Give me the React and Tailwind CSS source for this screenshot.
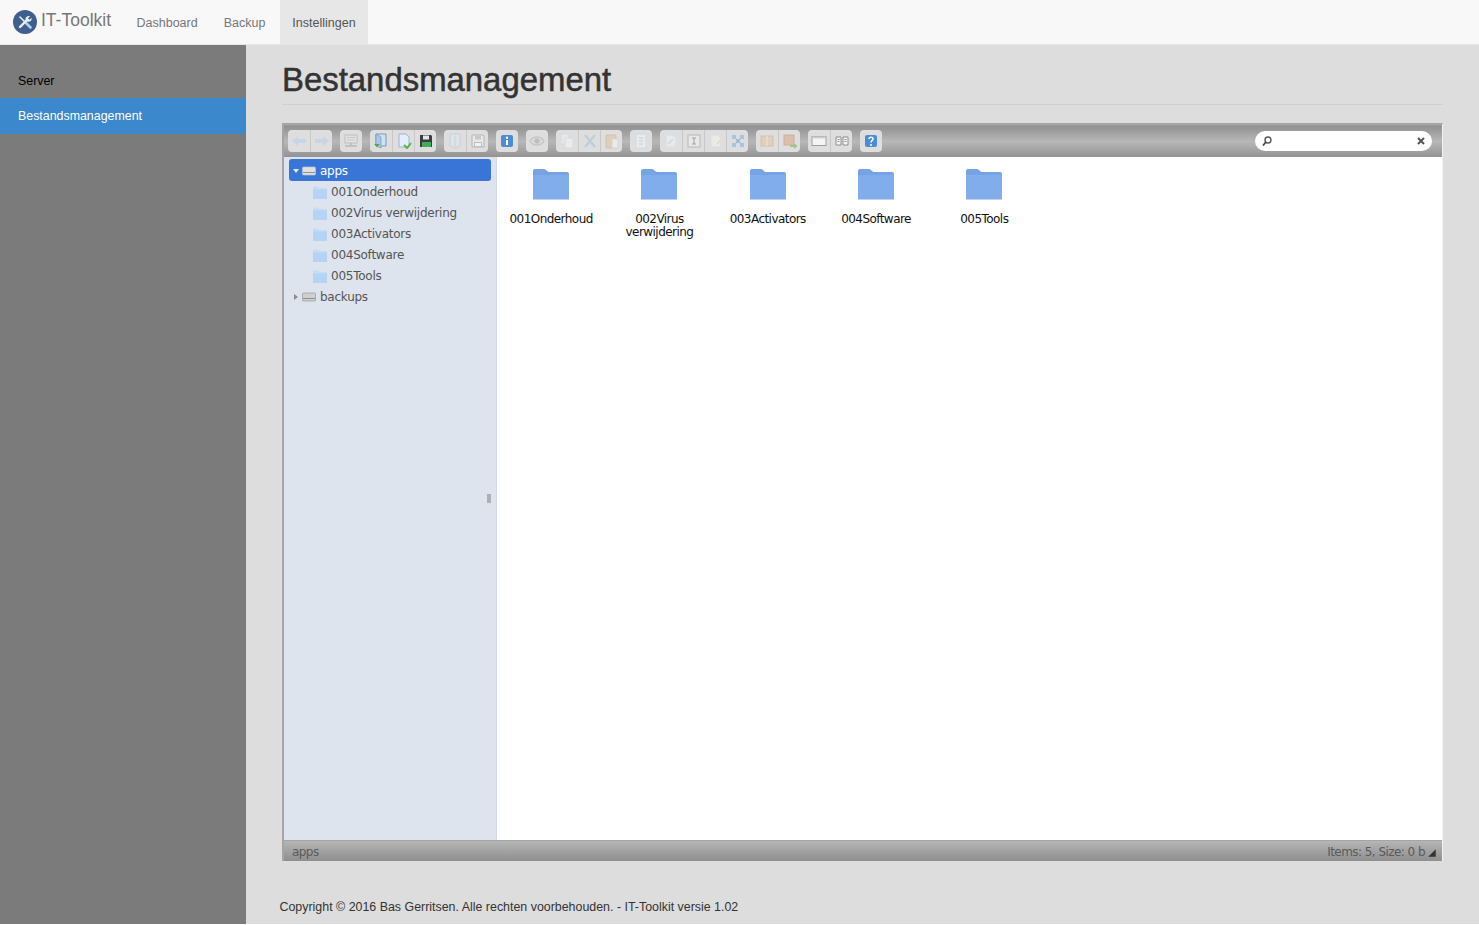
import React from "react";

function Ic({ k }) {
  const c = "w-[16px] h-[16px]";
  switch (k) {
    case "back":
      return <svg className={c} viewBox="0 0 16 16"><path d="M1 8l6-5v3h8v4H7v3z" fill="#b5d3ec" /></svg>;
    case "fwd":
      return <svg className={c} viewBox="0 0 16 16"><path d="M15 8L9 3v3H1v4h8v3z" fill="#b5d3ec" /></svg>;
    case "net":
      return <svg className={c} viewBox="0 0 16 16"><rect x="2" y="2" width="12" height="8" fill="#e4e4e4" stroke="#a9a9a9" /><path d="M4 4.500h8M4 7h8" stroke="#bbb" /><path d="M8 10v2M2 13h12" stroke="#a0a0a0" strokeWidth="1.500" /></svg>;
    case "open":
      return <svg className={c} viewBox="0 0 16 16"><path d="M3 1h10v12H3z" fill="#cfe2f3" stroke="#7a98b5" /><path d="M3 1l5 3v11l-5-2z" fill="#a9c8e6" stroke="#7a98b5" strokeWidth=".7" /><path d="M1 11l3 3 3-3z" fill="#55a84a" /></svg>;
    case "new":
      return <svg className={c} viewBox="0 0 16 16"><path d="M3 1h7l3 3v10H3z" fill="#e4eefa" stroke="#9db6cf" /><path d="M8 12l3 3 4-5" fill="none" stroke="#62b04e" strokeWidth="2" /></svg>;
    case "save":
      return <svg className={c} viewBox="0 0 16 16"><path d="M2 2h11l1 1v11H2z" fill="#3d3d3d" /><rect x="5" y="2.500" width="6" height="4" fill="#dfe8ee" /><rect x="4" y="9" width="9" height="5" fill="#3fae58" /></svg>;
    case "book":
      return <svg className={c} viewBox="0 0 16 16"><path d="M3 1h10v12l-5 2-5-2z" fill="#dce6f0" stroke="#b8c8d8" /><path d="M8 3v11" stroke="#b8c8d8" /></svg>;
    case "floppy":
      return <svg className={c} viewBox="0 0 16 16"><path d="M2 2h11l1 1v11H2z" fill="#eee" stroke="#999" /><rect x="5" y="2.500" width="6" height="4" fill="#bbb" /><rect x="4.500" y="9.500" width="7" height="4" fill="#fff" stroke="#aaa" /></svg>;
    case "info":
      return <svg className={c} viewBox="0 0 16 16"><rect x="2" y="2" width="12" height="12" rx="2" fill="#4a8cd6" /><circle cx="8" cy="4.800" r="1.200" fill="#fff" /><path d="M8 7v5" stroke="#fff" strokeWidth="2" /></svg>;
    case "eye":
      return <svg className={c} viewBox="0 0 16 16"><ellipse cx="8" cy="8" rx="7" ry="4" fill="#d5d5d5" stroke="#a8a8a8" /><circle cx="8" cy="8" r="2.500" fill="#a8a8a8" /></svg>;
    case "copy":
      return <svg className={c} viewBox="0 0 16 16"><path d="M2 1h8v10H2z" fill="#ededed" stroke="#d2d8de" /><path d="M6 5h8v10H6z" fill="#f3f3f3" stroke="#d2d8de" /></svg>;
    case "cut":
      return <svg className={c} viewBox="0 0 16 16"><path d="M3 2l10 12M13 2L3 14" stroke="#a7c3db" strokeWidth="2.400" /></svg>;
    case "paste":
      return <svg className={c} viewBox="0 0 16 16"><rect x="2" y="2" width="10" height="13" rx="1" fill="#dcc6a4" stroke="#c8ad85" /><path d="M8 6h6v9H8z" fill="#f5f5f5" stroke="#cfcfcf" /></svg>;
    case "doc":
      return <svg className={c} viewBox="0 0 16 16"><rect x="3" y="1" width="10" height="14" fill="#eef2f6" stroke="#c9d6e2" /><path d="M6 5h4M6 8h4M6 11h4" stroke="#a9c2d8" /></svg>;
    case "dup":
      return <svg className={c} viewBox="0 0 16 16"><path d="M3 2h7l3 3v9H3z" fill="#edf1f5" stroke="#d5dde5" /><path d="M5 11l5-5" stroke="#c4d6e6" strokeWidth="1.500" /></svg>;
    case "rename":
      return <svg className={c} viewBox="0 0 16 16"><rect x="2" y="2" width="12" height="12" fill="#eeeeee" stroke="#a0a0a0" /><path d="M6 5h4M8 5v6M6 11h4" stroke="#777" /></svg>;
    case "edit":
      return <svg className={c} viewBox="0 0 16 16"><path d="M3 2h7l3 3v9H3z" fill="#f2f2f2" stroke="#dddddd" /><path d="M9 11l4-4" stroke="#e2d6a8" strokeWidth="1.500" /></svg>;
    case "resize":
      return <svg className={c} viewBox="0 0 16 16"><path d="M2 2h4v4H2zM10 2h4v4h-4zM2 10h4v4H2zM10 10h4v4h-4z" fill="#a5c6e2" /><path d="M6 6l4 4M10 6l-4 4" stroke="#8fb4d4" strokeWidth="1.500" /></svg>;
    case "arc":
      return <svg className={c} viewBox="0 0 16 16"><rect x="2" y="3" width="12" height="10" fill="#e2c7a8" stroke="#d0ad88" /><path d="M8 3v10" stroke="#ecd9c2" strokeWidth="2" /></svg>;
    case "ext":
      return <svg className={c} viewBox="0 0 16 16"><rect x="2" y="2" width="10" height="10" fill="#dba98a" stroke="#c98f6d" /><path d="M8 12h4v-2l3.500 3-3.500 3v-2H8z" fill="#6cb85a" /></svg>;
    case "view":
      return <svg className={c} viewBox="0 0 16 16"><rect x="1" y="3.500" width="14" height="9" fill="#f5f5f5" stroke="#9f9f9f" /><rect x="1" y="3.500" width="14" height="2" fill="#cfcfcf" /></svg>;
    case "sort":
      return <svg className={c} viewBox="0 0 16 16"><path d="M2 4h5v8H2zM9 4h5v8H9z" fill="#f5f5f5" stroke="#8f8f8f" /><path d="M3.500 6.500h2M3.500 8.500h2M10.500 6.500h2M10.500 8.500h2" stroke="#8f8f8f" /></svg>;
    case "help":
      return <svg className={c} viewBox="0 0 16 16"><rect x="2" y="2" width="12" height="12" rx="2" fill="#4a8cd6" /><path d="M6 6c0-2.500 4-2.500 4 0 0 1.500-2 1.500-2 3.500" fill="none" stroke="#fff" strokeWidth="1.500" /><circle cx="8" cy="12" r="1" fill="#fff" /></svg>;
    default:
      return null;
  }
}

const groups = [
  [["back", 1], ["fwd", 1]],
  [["net", 1]],
  [["open", 0], ["new", 0], ["save", 0]],
  [["book", 1], ["floppy", 1]],
  [["info", 0]],
  [["eye", 1]],
  [["copy", 1], ["cut", 1], ["paste", 1]],
  [["doc", 1]],
  [["dup", 1], ["rename", 1], ["edit", 1], ["resize", 0]],
  [["arc", 1], ["ext", 1]],
  [["view", 0], ["sort", 0]],
  [["help", 0]],
];

function Folder({ small }) {
  if (small)
    return (
      <svg className="w-[16px] h-[16px]" viewBox="0 0 16 16">
        <path d="M1 2.500h5l1 1.500h8v11H1z" fill="#c4dcf4" />
        <path d="M1 5.500h14V15H1z" fill="#b5d3f2" />
      </svg>
    );
  return (
    <svg className="w-[36px] h-[32px]" viewBox="0 0 36 32">
      <path d="M0 3a2 2 0 0 1 2-2h9c2 0 3 3 5 3h18a2 2 0 0 1 2 2v24a1 1 0 0 1-1 1H1a1 1 0 0 1-1-1z" fill="#76a3e4" />
      <path d="M0 7h36v23a1 1 0 0 1-1 1H1a1 1 0 0 1-1-1z" fill="#82adec" />
      <path d="M0 31.500h36" stroke="#c3d2e8" strokeWidth="1" />
    </svg>
  );
}

function Disk({ light }) {
  return (
    <svg className="w-[14px] h-[12px] shrink-0" viewBox="0 0 14 12">
      <rect x="0.500" y="2" width="13" height="8" rx="1" fill={light ? "#e0e0e0" : "#cfcfcf"} stroke={light ? "#b5c3d8" : "#9a9a9a"} strokeWidth=".7" />
      <path d="M1 7.500h12" stroke="#8f8f8f" />
    </svg>
  );
}

const folders = ["001Onderhoud", "002Virus verwijdering", "003Activators", "004Software", "005Tools"];
const verdana = "font-['DejaVu_Sans',sans-serif] text-[12px] tracking-[-0.25px]";
const verdanaTight = "font-['DejaVu_Sans',sans-serif] text-[12px] tracking-[-0.55px]";

export default function App() {
  return (
    <div className="h-[925px] flex flex-col bg-white font-['Liberation_Sans',Arial,sans-serif] overflow-hidden">
      <nav className="h-[45px] shrink-0 bg-[#f8f8f8] border-b border-[#e7e7e7] flex items-stretch pl-[13px]">
        <div className="flex items-center gap-[4px] w-[110.500px] pb-[1px]">
          <svg className="w-[24px] h-[24px] shrink-0" viewBox="0 0 24 24">
            <circle cx="12" cy="12" r="12" fill="#3f5f8e" />
            <path d="M7 7l5 5" stroke="#e9eef4" strokeWidth="1.600" strokeLinecap="round" />
            <path d="M12 12l5.500 5.500" stroke="#a9d4ea" strokeWidth="2.600" strokeLinecap="round" />
            <path d="M7 17l7-7" stroke="#e9eef4" strokeWidth="2.400" strokeLinecap="round" />
            <path d="M13 11c-1.500-2.500.5-5.500 4-4.800l-2 2 1.600 1.600 2-2c.7 3.500-2.800 5-5.600 3.200z" fill="#e9eef4" />
          </svg>
          <span className="text-[17.500px] text-[#777777] leading-none mb-[1px]">IT-Toolkit</span>
        </div>
        {["Dashboard", "Backup", "Instellingen"].map((t, i) => (
          <a
            key={t}
            className={
              "text-[12.500px] flex items-center pt-[2px] " +
              (i === 2 ? "bg-[#e7e7e7] text-[#555555] ml-[2px] pl-[12px] pr-[12px]" : "text-[#777777] px-[13px]")
            }
          >
            {t}
          </a>
        ))}
      </nav>
      <div className="flex h-[879px] shrink-0">
        <aside className="w-[246px] shrink-0 bg-[#7b7b7b] pt-[18px] text-[12.400px]">
          <div className="h-[35px] pl-[18px] pt-[1px] flex items-center text-black">Server</div>
          <div className="h-[36px] pl-[18px] flex items-center bg-[#3b88cc] text-white">Bestandsmanagement</div>
        </aside>
        <main className="flex-1 min-w-0 bg-[#dddddd] pl-[36px] pr-[36px] flex flex-col">
          <h1 className="text-[32.900px] font-medium text-[#333333] [-webkit-text-stroke:0.5px_#333333] leading-[36px] pt-[17px] pb-[7px] h-[60px] border-b border-[#d0d0d0]">
            Bestandsmanagement
          </h1>
          <div className="mt-[18px] h-[738px] flex flex-col border-[2px] border-[#a5a5a5] border-b-0 border-r border-r-[#f2f2f2] bg-white">
            <div className="h-[32px] shrink-0 flex items-center pl-[4px] pr-[10px] pb-[2px] gap-[8px] bg-gradient-to-b from-[#909090] via-[#b8b8b8] to-[#939393] border-t border-[#9a9a9a]">
              {groups.map((g, i) => (
                <div key={i} className="flex rounded-[4px] overflow-hidden bg-[#dedede]">
                  {g.map(([k, dim], j) => (
                    <div
                      key={k}
                      className={"w-[22px] h-[22px] flex items-center justify-center " + (j ? "border-l border-[#c8c8c8]" : "")}
                    >
                      <span className={dim ? "opacity-60 flex" : "flex"}>
                        <Ic k={k} />
                      </span>
                    </div>
                  ))}
                </div>
              ))}
              <div className="ml-auto w-[177px] h-[20px] rounded-full bg-white flex items-center justify-between px-[6px]">
                <svg className="w-[12px] h-[12px]" viewBox="0 0 12 12">
                  <circle cx="7" cy="5" r="3" fill="none" stroke="#555" strokeWidth="1.400" />
                  <path d="M5 7L2 10.500" stroke="#444" strokeWidth="1.800" />
                </svg>
                <svg className="w-[10px] h-[10px]" viewBox="0 0 10 10">
                  <path d="M2 2l6 6M8 2L2 8" stroke="#555" strokeWidth="2" />
                </svg>
              </div>
            </div>
            <div className="flex-1 min-h-0 flex">
              <div className="w-[213px] shrink-0 bg-[#dde4ee] border-r border-[#d4dae2] pl-[5px] pr-[5px] pt-[2px] relative">
                <div className={"h-[22px] rounded-[3px] bg-[#3875d7] text-white pt-[1px] flex items-center pl-[3px] gap-[2px] " + verdana}>
                  <svg className="w-[8px] h-[8px] shrink-0" viewBox="0 0 8 8"><path d="M1 2h6L4 6z" fill="#dfe9f7" /></svg>
                  <Disk light />
                  <span className="ml-[2px]">apps</span>
                </div>
                {folders.map((f) => (
                  <div key={f} className={"h-[21px] flex items-center pl-[23px] gap-[3px] text-[#555555] " + verdana}>
                    <Folder small />
                    <span>{f}</span>
                  </div>
                ))}
                <div className={"h-[21px] flex items-center pl-[3px] gap-[2px] text-[#555555] pt-[1px] " + verdana}>
                  <svg className="w-[8px] h-[8px] shrink-0" viewBox="0 0 8 8"><path d="M2 1l4 3-4 3z" fill="#8c8c8c" /></svg>
                  <Disk />
                  <span className="ml-[2px]">backups</span>
                </div>
                <div className="absolute right-[5px] top-[337px] w-[4px] h-[9px] bg-[#b0b0b0]" />
              </div>
              <div className="flex-1 min-w-0 bg-white flex items-start pt-[8px]">
                {folders.map((f) => (
                  <div key={f} className={"w-[108.300px] flex flex-col items-center text-center text-[#111111] " + verdanaTight}>
                    <div className="h-[36px] flex items-center mt-[1px]"><Folder /></div>
                    <div className="mt-[11px] leading-[13px] w-[96px]">{f}</div>
                  </div>
                ))}
              </div>
            </div>
            <div className={"h-[21px] shrink-0 flex items-center justify-between pl-[8px] pr-[5px] pt-[2px] text-[#5a5a5a] bg-gradient-to-b from-[#b5b5b5] to-[#8f8f8f] border-t border-[#a5a5a5] " + verdanaTight}>
              <span>apps</span>
              <span className="flex items-center">
                Items: 5, Size: 0 b
                <svg className="w-[10px] h-[10px] ml-[2px] mt-[2px]" viewBox="0 0 8 8"><path d="M7 1v6H1z" fill="#333" /></svg>
              </span>
            </div>
          </div>
          <footer className="text-[12.420px] text-[#333333] mt-[37px] -ml-[2.500px]">
            Copyright © 2016 Bas Gerritsen. Alle rechten voorbehouden. - IT-Toolkit versie 1.02
          </footer>
        </main>
      </div>
      <div className="h-[1px] bg-white" />
    </div>
  );
}
